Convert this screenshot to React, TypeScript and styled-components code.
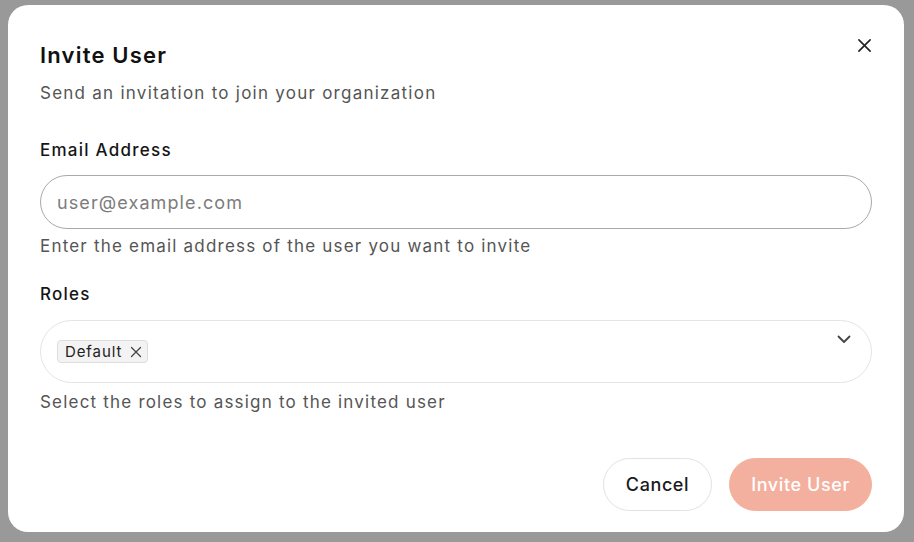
import React from "react";
import styled, { createGlobalStyle } from "styled-components";

const Global = createGlobalStyle`
  html, body { margin: 0; padding: 0; }
  body { font-family: "Inter", "Open Sans", sans-serif; background: #999999; }
  * { box-sizing: border-box; }
`;

const Overlay = styled.div`
  width: 914px;
  height: 542px;
  background: #999999;
  padding: 5px 10px 10px 8px;
  display: flex;
`;

const Dialog = styled.div`
  position: relative;
  flex: 1;
  background: #ffffff;
  border-radius: 20px;
  padding: 36px 32px 21px 32px;
  display: flex;
  flex-direction: column;
`;

const CloseButton = styled.button`
  position: absolute;
  top: 30px;
  right: 30px;
  width: 20px;
  height: 20px;
  padding: 0;
  border: none;
  background: transparent;
  color: #222;
  display: flex;
  align-items: center;
  justify-content: center;
`;

const Title = styled.h2`
  margin: 0;
  font-size: 22px;
  line-height: 28px;
  font-weight: 600;
  color: #111;
  letter-spacing: 1.2px;
`;

const Subtitle = styled.p`
  margin: 13px 0 0 0;
  font-size: 17px;
  line-height: 22px;
  color: #555;
  font-weight: 400;
  letter-spacing: 1.25px;
`;

const Field = styled.div<{ $top: number }>`
  display: flex;
  flex-direction: column;
  margin-top: ${(p) => p.$top}px;
`;

const Label = styled.label`
  font-size: 17px;
  line-height: 22px;
  font-weight: 500;
  color: #151515;
  letter-spacing: 1.25px;
`;

const Input = styled.input`
  margin-top: 14px;
  height: 54px;
  border: 1px solid #a9a9a9;
  border-radius: 999px;
  padding: 0 16px;
  font-family: inherit;
  font-size: 18px;
  letter-spacing: 1.1px;
  color: #222;
  outline: none;
  &::placeholder { color: #7c7c7c; }
`;

const Help = styled.div<{ $top: number }>`
  margin-top: ${(p) => p.$top}px;
  font-size: 17px;
  line-height: 22px;
  color: #555;
  letter-spacing: 1.2px;
`;

const Select = styled.div`
  margin-top: 15px;
  height: 63px;
  border: 1px solid #e4e4e4;
  border-radius: 999px;
  padding: 0 20px 0 16px;
  display: flex;
  align-items: center;
  justify-content: space-between;
`;

const Chip = styled.span`
  display: inline-flex;
  align-items: center;
  gap: 8px;
  height: 23px;
  padding: 0 5px 0 7px;
  background: #f3f3f3;
  border: 1px solid #dddddd;
  border-radius: 4px;
  font-size: 15px;
  letter-spacing: 0.9px;
  color: #222;
`;

const Chevron = styled.span`
  align-self: flex-start;
  margin-top: 14px;
  display: flex;
  color: #444;
`;

const Footer = styled.div`
  margin-top: auto;
  display: flex;
  justify-content: flex-end;
  gap: 17px;
`;

const Button = styled.button<{ $primary?: boolean }>`
  height: 53px;
  border-radius: 999px;
  font-family: inherit;
  font-size: 18px;
  font-weight: 500;
  letter-spacing: 0.6px;
  padding: 0 ${(p) => (p.$primary ? 21 : 22)}px;
  border: 1px solid ${(p) => (p.$primary ? "#f4b09f" : "#e2e2e2")};
  background: ${(p) => (p.$primary ? "#f4b09f" : "#ffffff")};
  color: ${(p) => (p.$primary ? "#ffffff" : "#1a1a1a")};
`;

export default function App() {
  return (
    <>
      <Global />
      <Overlay>
        <Dialog>
          <CloseButton aria-label="Close">
            <svg width="15" height="15" viewBox="0 0 16 16" fill="none" stroke="currentColor" strokeWidth="1.7" strokeLinecap="round">
              <path d="M2 2 L14 14 M14 2 L2 14" />
            </svg>
          </CloseButton>
          <Title>Invite User</Title>
          <Subtitle>Send an invitation to join your organization</Subtitle>
          <Field $top={35}>
            <Label>Email Address</Label>
            <Input placeholder="user@example.com" />
            <Help $top={6}>Enter the email address of the user you want to invite</Help>
          </Field>
          <Field $top={26}>
            <Label>Roles</Label>
            <Select>
              <Chip>
                Default
                <svg width="12" height="12" viewBox="0 0 12 12" fill="none" stroke="#444" strokeWidth="1.3" strokeLinecap="round">
                  <path d="M1.5 1.5 L10.5 10.5 M10.5 1.5 L1.5 10.5" />
                </svg>
              </Chip>
              <Chevron>
                <svg width="14" height="9" viewBox="0 0 14 9" fill="none" stroke="currentColor" strokeWidth="1.8" strokeLinecap="round" strokeLinejoin="round">
                  <path d="M1.5 1.5 L7 7 L12.5 1.5" />
                </svg>
              </Chevron>
            </Select>
            <Help $top={8}>Select the roles to assign to the invited user</Help>
          </Field>
          <Footer>
            <Button>Cancel</Button>
            <Button $primary>Invite User</Button>
          </Footer>
        </Dialog>
      </Overlay>
    </>
  );
}
